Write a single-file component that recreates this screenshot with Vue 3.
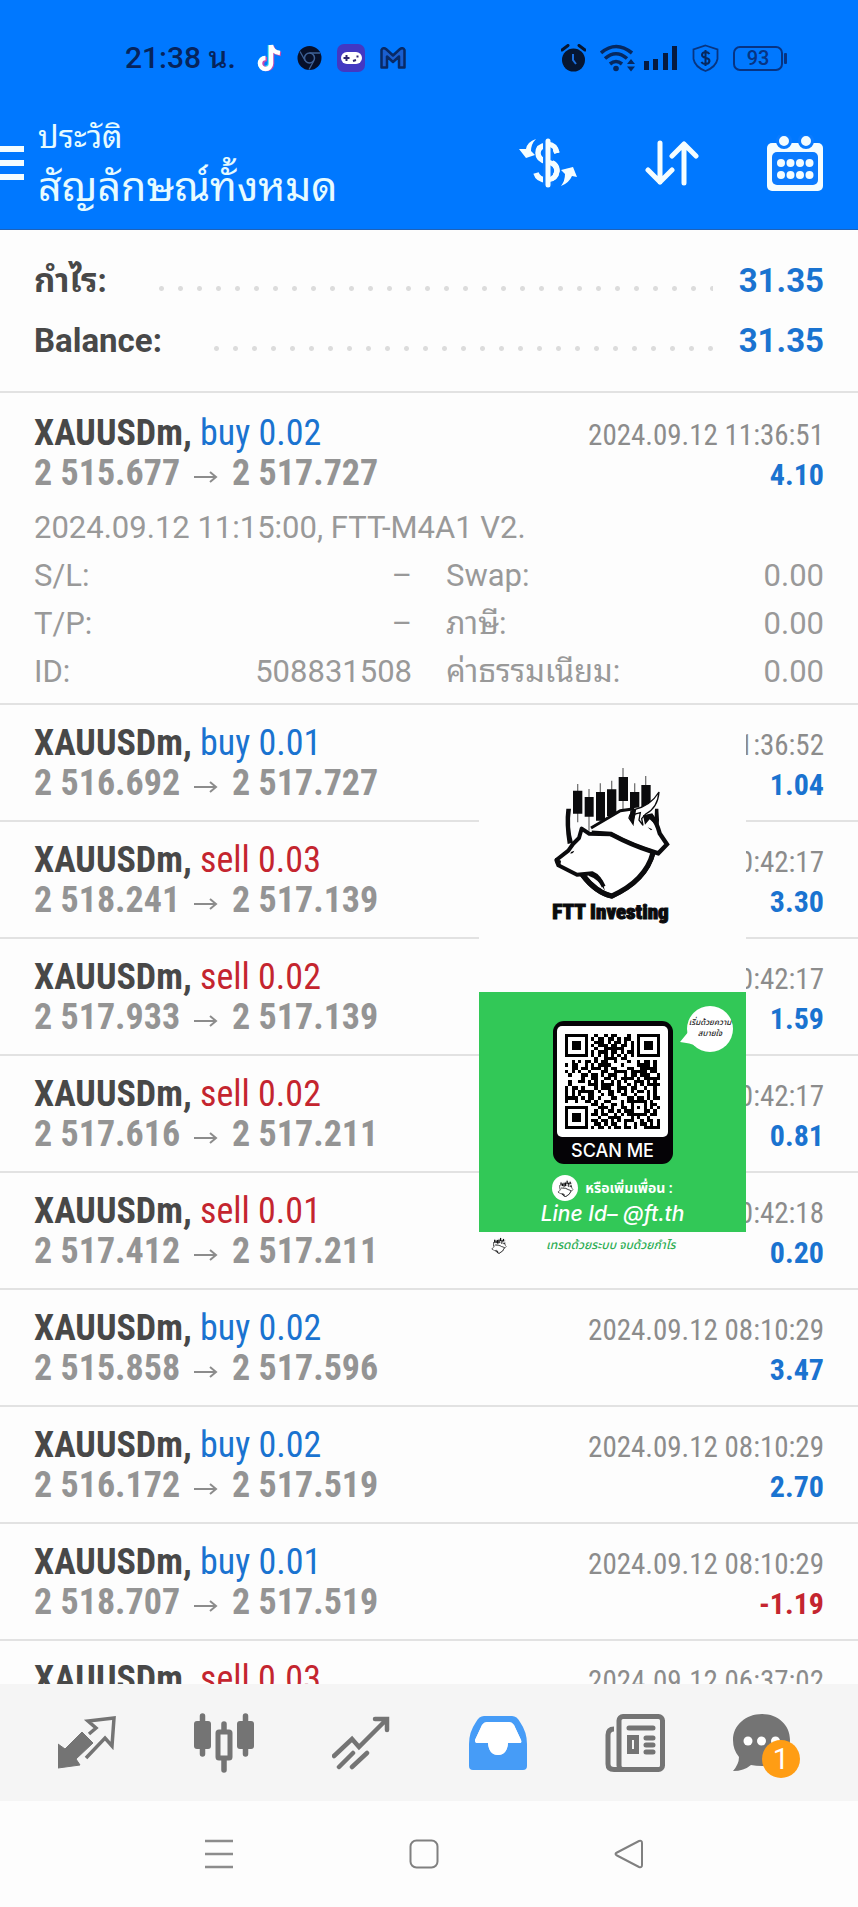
<script setup>
const summary = [
  { label: 'กำไร:', value: '31.35' },
  { label: 'Balance:', value: '31.35' },
]

const details = [
  { label: 'S/L:', value: '–' },
  { label: 'Swap:', value: '0.00' },
  { label: 'T/P:', value: '–' },
  { label: 'ภาษี:', value: '0.00' },
  { label: 'ID:', value: '508831508' },
  { label: 'ค่าธรรมเนียม:', value: '0.00' },
]

const deals = [
  { side: 'buy', lot: '0.02', open: '2 515.677', close: '2 517.727', time: '2024.09.12 11:36:51', profit: '4.10', expanded: true },
  { side: 'buy', lot: '0.01', open: '2 516.692', close: '2 517.727', time: '2024.09.12 11:36:52', profit: '1.04' },
  { side: 'sell', lot: '0.03', open: '2 518.241', close: '2 517.139', time: '2024.09.12 10:42:17', profit: '3.30' },
  { side: 'sell', lot: '0.02', open: '2 517.933', close: '2 517.139', time: '2024.09.12 10:42:17', profit: '1.59' },
  { side: 'sell', lot: '0.02', open: '2 517.616', close: '2 517.211', time: '2024.09.12 10:42:17', profit: '0.81' },
  { side: 'sell', lot: '0.01', open: '2 517.412', close: '2 517.211', time: '2024.09.12 10:42:18', profit: '0.20' },
  { side: 'buy', lot: '0.02', open: '2 515.858', close: '2 517.596', time: '2024.09.12 08:10:29', profit: '3.47' },
  { side: 'buy', lot: '0.02', open: '2 516.172', close: '2 517.519', time: '2024.09.12 08:10:29', profit: '2.70' },
  { side: 'buy', lot: '0.01', open: '2 518.707', close: '2 517.519', time: '2024.09.12 08:10:29', profit: '-1.19' },
  { side: 'sell', lot: '0.03', open: '2 518.707', close: '2 517.519', time: '2024.09.12 06:37:02', profit: '2.10' },
]

const qrRows = [
  '#######..#..#.##...#..#######',
  '#.....#.#.##.##.#.##..#.....#',
  '#.###.#..###.#.##.#.#.#.###.#',
  '#.###.#.#.###.##.##.#.#.###.#',
  '#.###.#..#..######..#.#.###.#',
  '#.....#.#.###.##.#.##.#.....#',
  '#######.#.#.#.#.#.#.#.#######',
  '.........#..####.##..........',
  '..#.#.##.#.##..#...#..#.##.#.',
  '#.##..#.#.####...#....####.#.',
  '..##.##.###.#.##...##..#####.',
  '#.#.#..#...##..####.#####.##.',
  '.#...##.##.#.###..#.##.###..#',
  '.....#..##..##.#.####.#.#####',
  '.#..##.#.#.#..#.#.#..###.#.#.',
  '.#.....###.####.#..#.#.#.####',
  '#.##.#...#.###..###.##..#..#.',
  '#.#.#####.#..##.#.#.#.##.#.#.',
  '#.#.#..##..#.##..##..#...#.#.',
  '####.#.##.#...##...##.##.#.##',
  '#..#..##.#..##...#.######.#..',
  '........##.#..##.#..#...#.##.',
  '#######...###.#..##.#.#.#.#.#',
  '#.....#..#.#.##.#.###...##.#.',
  '#.###.#.##.##..#.#.######.##.',
  '#.###.#...#..####...#.#..#...',
  '#.###.#.##.##.#.#.###..#.##.#',
  '#.....#..##.#.##..#..#.##.#.#',
  '#######.#.##.#.##.##.#..#####',
]
const qrPath = qrRows
  .flatMap((row, y) => [...row].map((c, x) => (c === '#' ? `M${x} ${y}h1v1h-1z` : '')))
  .join('')
</script>

<template>
  <div class="screen">
    <svg class="defs" width="0" height="0" aria-hidden="true">
      <symbol id="ftt-mark" viewBox="0 0 372 405">
        <g stroke="#777" stroke-width="4">
          <path d="M86 60V175M120 75V200M154 58V170M188 50V150M222 12V135M257 58V130M290 36V120" />
        </g>
        <path d="M72 80h28v69H72zM107 99h27v59h-27zM141 84h27v86h-27zM174 76h28v80h-28zM209 39h28v72h-28zM243 84h28v55h-28zM277 63h28v66h-28z" fill="#0b0b0d" />
        <path d="M66 134H52Q46 180 56 240L72 236Q58 190 66 134z" fill="#0b0b0d" />
        <path d="M100 332Q140 385 188 396Q290 350 312 266" fill="none" stroke="#0b0b0d" stroke-width="16" />
        <path d="M318 134h10q4 32 0 66l-12-20z" fill="#0b0b0d" />
        <path d="M134 190L214 142L256 132L286 128Q318 112 330 86Q326 130 306 152Q326 180 330 202L354 240L342 254L328 268L298 262L190 212z" fill="#fff" />
        <path d="M126 192L214 140L256 134" fill="none" stroke="#0b0b0d" stroke-width="9" />
        <path d="M128 206L186 210Q250 245 328 268L354 241L332 208Q324 176 306 154" fill="none" stroke="#0b0b0d" stroke-width="13" />
        <path d="M258 136Q304 126 330 84Q326 132 290 150L278 164L282 184L270 168L274 146L258 150Q252 162 252 180L240 162Q244 144 258 136z" fill="#fff" stroke="#0b0b0d" stroke-width="4" />
        <path d="M244 140l18-6-8 46-12-14zM282 154l28-6 18 42-26-24-14 16zM296 190l14 6-4 3z" fill="#0b0b0d" />
        <path d="M98 196L122 210L186 212L300 262L306 272Q286 345 188 390L158 376Q158 345 130 328L84 332L26 302L22 288L58 258L70 240L92 214z" fill="#fff" />
        <path d="M186 211Q250 245 306 262" fill="none" stroke="#0b0b0d" stroke-width="13" />
        <path d="M122 210L98 194L90 222L72 240L58 260L22 288L28 304L84 332L130 328Q150 336 164 368M118 209L186 211" fill="none" stroke="#0b0b0d" stroke-width="12" stroke-linejoin="round" />
        <path d="M100 332Q140 385 188 396Q290 350 312 266" fill="none" stroke="#0b0b0d" stroke-width="15" />
        <path d="M120 330Q150 328 160 350L168 382Q150 345 120 336zM18 282l18 8-2 16-14-8zM66 264l10-4-4 7-8 2z" fill="#0b0b0d" />
      </symbol>
    </svg>

    <header class="top">
      <div class="status">
        <div class="status-group">
          <span class="clock">21:38 น.</span>
          <svg width="26" height="28" viewBox="0 0 26 28">
            <path d="M14 1v18a5 5 0 1 1-5-5M14 1q1 7 9 8" fill="none" stroke="#3fe5e8" stroke-width="4.5" />
            <path d="M16 2v18a5 5 0 1 1-5-5M16 2q1 7 9 8" fill="none" stroke="#c44ab0" stroke-width="4.5" />
            <path d="M15 1v18.500a5.500 5.500 0 1 1-5.500-5.500M15 1q1 7 9 8" fill="none" stroke="#fff" stroke-width="4.500" />
          </svg>
          <svg width="25" height="26" viewBox="0 0 25 26">
            <circle cx="12.500" cy="13" r="12" fill="#07102a" />
            <circle cx="12.500" cy="13" r="5" fill="none" stroke="#3f6196" stroke-width="1.500" />
            <path d="M12.500 8H23M8 15.500L3 6.500M17 15.500L12 24.500" stroke="#3f6196" stroke-width="1.300" />
          </svg>
          <svg width="28" height="28" viewBox="0 0 28 28">
            <rect width="28" height="28" rx="7" fill="#4338c2" />
            <rect x="4" y="8" width="21" height="12" rx="6" fill="#fff" />
            <path d="M9.500 11v6M6.500 14h6M16 17l3-1M19.500 12.500h2" stroke="#2c236f" stroke-width="2" />
          </svg>
          <svg width="26" height="22" viewBox="0 0 26 22">
            <path d="M1.500 20.500V3Q3 0 6 2L13 8.500L20 2Q23 0 24.500 3V20.500H19V9.500L13 15L7 9.500V20.500z" fill="#1a5fd0" stroke="#082a66" stroke-width="2.500" stroke-linejoin="round" />
          </svg>
        </div>
        <div class="status-group right">
          <svg width="25" height="28" viewBox="0 0 25 28">
            <circle cx="12.500" cy="16" r="11.500" fill="#061632" />
            <path d="M1 6L7 1.500M24 6L18 1.500" stroke="#061632" stroke-width="3" stroke-linecap="round" />
            <path d="M12 10v6l3 4" fill="none" stroke="#1e6fdc" stroke-width="2" />
          </svg>
          <svg width="78" height="28" viewBox="0 0 78 28">
            <g fill="none" stroke="#06285f" stroke-width="3.600">
              <path d="M1 9Q16 -4 32 9" /><path d="M5 14.500Q16 5 27 14.500" /><path d="M10 20Q16 15 22 20" />
            </g>
            <circle cx="16" cy="24.500" r="2.800" fill="#06285f" />
            <path d="M27 20l4-5 4 5zM27 22.500l4 5 4-5z" fill="#06285f" />
            <path d="M44 17h5v9h-5zM53 15h5v11h-5zM63 9h5v17h-5zM72 2h5v24h-5z" fill="#061a40" />
          </svg>
          <svg width="27" height="28" viewBox="0 0 27 28">
            <path d="M13.500 1.500L25.500 5.500V15Q24 23 13.500 27Q3 23 1.500 15V5.500z" fill="none" stroke="#083580" stroke-width="1.800" />
            <path d="M17.500 10Q16 8 13.500 8Q10 8.300 10 11Q10 13 13.500 13.700Q17.500 14.500 17.500 17Q17 20 13.500 20Q10.500 20 9.500 17.800M13.500 6v16" fill="none" stroke="#06285f" stroke-width="2" />
          </svg>
          <span class="battery">93</span>
        </div>
      </div>

      <div class="appbar">
        <button class="burger" aria-label="Menu"><i></i><i></i><i></i></button>
        <div class="titles">
          <p class="sub">ประวัติ</p>
          <h1>สัญลักษณ์ทั้งหมด</h1>
        </div>
        <nav class="actions">
          <button aria-label="Currency">
            <svg width="58" height="50" viewBox="0 0 58 50">
              <path d="M38 15Q35 7 28 7Q19 8 19 15Q19 22 28 23.500Q38 25 38 33Q37 41 28 42Q19 42 17 35" fill="none" stroke="#f4fdff" stroke-width="5.500" />
              <path d="M29 3v44" stroke="#0a7bff" stroke-width="10" /><path d="M29 3v44" stroke="#f4fdff" stroke-width="5" stroke-linecap="round" />
              <path d="M29 6Q37 7 38 15M29 24Q38 26 38 33Q37 41 29 42" fill="none" stroke="#f4fdff" stroke-width="5" />
              <path d="M17 1Q8 4 7 11L0 11L7 20L16 17L12 13Q12 6 17 1zM42 48Q50 45 53 38L58 39L54 29L42 32L46 36Q46 43 42 48z" fill="#f4fdff" />
            </svg>
          </button>
          <button aria-label="Sort">
            <svg width="54" height="46" viewBox="0 0 54 46">
              <path d="M15 3V42M3 30L15 42L27 30M39 43V4M27 16L39 4L51 16" fill="none" stroke="#f4fdff" stroke-width="5" stroke-linecap="round" stroke-linejoin="round" />
            </svg>
          </button>
          <button aria-label="Calendar">
            <svg width="56" height="56" viewBox="0 0 56 56">
              <rect y="8" width="56" height="48" rx="5" fill="#f4fdff" />
              <rect x="5" y="17" width="46" height="33" rx="5" fill="#0a7bff" />
              <g fill="#f4fdff" stroke="#0a7bff" stroke-width="3"><circle cx="17" cy="6" r="6.500" /><circle cx="39" cy="6" r="6.500" /></g>
              <g fill="#f4fdff">
                <circle v-for="n in 8" :key="n" :cx="14 + ((n - 1) % 4) * 9.500" :cy="n > 4 ? 40 : 28" r="4" />
              </g>
            </svg>
          </button>
        </nav>
      </div>
    </header>

    <main class="content">
      <dl class="summary">
        <div v-for="row in summary" :key="row.label" class="sum-row">
          <dt>{{ row.label }}</dt>
          <span class="dots"></span>
          <dd>{{ row.value }}</dd>
        </div>
      </dl>

      <ul class="deals">
        <li v-for="(d, i) in deals" :key="i" class="deal" :class="{ expanded: d.expanded }">
          <div class="line">
            <span class="symbol">XAUUSDm, <span :class="d.side">{{ d.side }} {{ d.lot }}</span></span>
            <time>{{ d.time }}</time>
          </div>
          <div class="line">
            <span class="prices">{{ d.open }}<svg width="24" height="12" viewBox="0 0 24 12"><path d="M0 6H22M16 1L22 6L16 11" fill="none" stroke="#8c8c8c" stroke-width="2" /></svg>{{ d.close }}</span>
            <span class="profit" :class="{ loss: d.profit.startsWith('-') }">{{ d.profit }}</span>
          </div>
          <div v-if="d.expanded" class="more">
            <p>2024.09.12 11:15:00, FTT-M4A1 V2.</p>
            <dl>
              <div v-for="x in details" :key="x.label"><dt>{{ x.label }}</dt><dd>{{ x.value }}</dd></div>
            </dl>
          </div>
        </li>
      </ul>

      <aside class="promo">
        <div class="brand">
          <svg width="124" height="135"><use href="#ftt-mark" /></svg>
          <strong>FTT Investing</strong>
        </div>
        <div class="green">
          <div class="qr">
            <svg viewBox="0 0 29 29" shape-rendering="crispEdges"><path :d="qrPath" /></svg>
            <span>SCAN ME</span>
          </div>
          <div class="bubble">
            <svg width="54" height="48" viewBox="0 0 54 48"><circle cx="30" cy="24" r="23" fill="#fff" /><path d="M9 26L0 37Q10 38 17 41z" fill="#fff" /></svg>
            <span>เริ่มด้วยความ<br>สบายใจ</span>
          </div>
          <p class="add"><i><svg width="17" height="18"><use href="#ftt-mark" /></svg></i>หรือเพิ่มเพื่อน :</p>
          <p class="line-id">Line Id– @ft.th</p>
        </div>
        <div class="foot">
          <svg width="16" height="18"><use href="#ftt-mark" /></svg>
          <em>เทรดด้วยระบบ จบด้วยกำไร</em>
        </div>
      </aside>
    </main>

    <nav class="tabs">
      <button aria-label="Quotes">
        <svg width="58" height="54" viewBox="0 0 58 54">
          <path d="M24 16L35 27L18 43L22 49L0 52V28L7 33z" fill="#747474" stroke="#747474" stroke-width="1" stroke-linejoin="round" />
          <path d="M31 18L38 12L30 5L56 2L54 30L47 22L28 42" fill="none" stroke="#747474" stroke-width="3.500" />
        </svg>
      </button>
      <button aria-label="Charts">
        <svg width="60" height="60" viewBox="0 0 60 60">
          <path d="M8.500 3V41M51.500 3V41M30 11V57" stroke="#747474" stroke-width="5.500" stroke-linecap="round" />
          <rect y="8" width="17" height="28" rx="3" fill="#747474" /><rect x="43" y="8" width="17" height="28" rx="3" fill="#747474" />
          <rect x="24" y="19" width="12" height="26" rx="1" fill="#f5f5f5" stroke="#747474" stroke-width="5" />
        </svg>
      </button>
      <button aria-label="Trade">
        <svg width="58" height="54" viewBox="0 0 58 54">
          <path d="M2 40L20 23L27 31L53 5M43 3H55V14M7 51L21 37M20 51L35 37" fill="none" stroke="#747474" stroke-width="4.500" stroke-linecap="round" />
        </svg>
      </button>
      <button aria-label="History">
        <svg width="58" height="54" viewBox="0 0 58 54">
          <path fill-rule="evenodd" d="M15 0H43Q48 0 51 6Q58 16 58 28V50Q58 54 54 54H4Q0 54 0 50V28Q0 16 7 6Q10 0 15 0zM18 6Q15 6 13 9L6 24Q6 27 8 27H19Q20 39 29 39Q38 39 39 27H51Q53 27 52 24L45 9Q43 6 40 6z" fill="#469cf7" />
          <path d="M18 6Q15 6 13 9L6 24Q6 27 8 27H19Q20 39 29 39Q38 39 39 27H51Q53 27 52 24L45 9Q43 6 40 6z" fill="#fff" />
        </svg>
      </button>
      <button aria-label="News">
        <svg width="60" height="58" viewBox="0 0 60 58">
          <rect x="14" y="2.500" width="43.500" height="53" rx="4" fill="none" stroke="#747474" stroke-width="5" />
          <path d="M9 15Q3 15 3 21V50Q3 55.500 9 55.500H20" fill="none" stroke="#747474" stroke-width="5" />
          <path d="M24 14H48M41 24H48M41 31H48M41 38H48" stroke="#747474" stroke-width="5" stroke-linecap="round" />
          <path d="M24.500 23.500h7v14h-7z" fill="none" stroke="#747474" stroke-width="5" />
        </svg>
      </button>
      <button aria-label="Messages" class="chat">
        <svg width="80" height="58" viewBox="0 0 80 58">
          <path d="M30 0C46 0 58 11 58 26S46 52 30 52Q24 52 19 51Q12 57 1 57Q7 50 7 43Q1 36 1 26C1 11 14 0 30 0z" fill="#747474" />
          <circle cx="16" cy="27" r="4.500" fill="#fff" /><circle cx="29.500" cy="27" r="4.500" fill="#fff" /><circle cx="43.500" cy="27" r="4.500" fill="#fff" />
        </svg>
        <span class="badge">1</span>
      </button>
    </nav>

    <nav class="system">
      <button aria-label="Recent apps"><svg width="30" height="30" viewBox="0 0 30 30"><path d="M1 2H29M1 15H29M1 28H29" stroke="#8c8c8c" stroke-width="2.500" /></svg></button>
      <button aria-label="Home"><svg width="30" height="30" viewBox="0 0 30 30"><rect x="1.500" y="1.500" width="27" height="27" rx="6" fill="none" stroke="#808080" stroke-width="2" /></svg></button>
      <button aria-label="Back"><svg width="30" height="30" viewBox="0 0 30 30"><path d="M3 13.500L25 2Q28 1 28 4V26Q28 29 25 28L3 16.500Q0 15 3 13.500z" fill="none" stroke="#808080" stroke-width="2" /></svg></button>
    </nav>
  </div>
</template>

<style>
body {
  background: #fdfdfd;
}
</style>

<style scoped>
.screen {
  display: flex;
  flex-direction: column;
  height: 100vh;
  overflow: hidden;
  background: #fdfdfd;
  color: #484848;
  font-family: Roboto, "Noto Sans Thai Looped", "Noto Looped Thai", Loma, Garuda, Waree, Umpush, "Noto Sans Thai", "Noto Sans", sans-serif;
}
.defs { position: absolute; }
p, h1, ul, dl, dd { margin: 0; padding: 0; }
svg { display: block; flex: none; }
button { border: 0; padding: 0; background: none; display: grid; place-items: center; }

.top { flex: none; background: #0078ff; border-bottom: 1px solid #1f62b8; }
.status { display: flex; justify-content: space-between; align-items: center; height: 48px; padding: 34px 70px 0 125px; }
.status-group { display: flex; align-items: center; gap: 15px; }
.status-group.right { gap: 14px; }
.clock { width: 116px; font-size: 30px; line-height: 48px; font-weight: 500; color: #06245c; white-space: nowrap; }
.battery {
  position: relative;
  width: 46px;
  margin-right: 5px;
  border: 2px solid #073483;
  border-radius: 7px;
  font-size: 20px;
  line-height: 21px;
  font-weight: 500;
  text-align: center;
  color: #073483;
}
.battery::after { content: ""; position: absolute; right: -6px; top: 5px; width: 3px; height: 11px; border-radius: 1px; background: #073483; }
.appbar { display: flex; align-items: center; height: 147px; padding: 14px 35px 0 0; box-sizing: border-box; }
.burger { width: 24px; gap: 8px; }
.burger i { width: 24px; height: 6px; background: #f4fdff; }
.titles { flex: 1; padding: 4px 0 0 14px; color: #e6fbff; }
.sub { font-size: 32px; line-height: 44px; }
h1 { font-size: 41px; line-height: 56px; font-weight: 400; white-space: nowrap; }
.actions { display: flex; align-items: center; gap: 68px; }

.content { flex: 1; min-height: 0; position: relative; overflow: hidden; }
.summary { padding: 21px 34px 20px; border-bottom: 2px solid #e2e2e2; }
.sum-row { display: flex; align-items: center; height: 60px; line-height: 60px; font-size: 33px; font-weight: 700; }
.dots { flex: 1; height: 5px; margin: 14px 26px 0 45px; background: radial-gradient(circle, #dcdcdc 0 2px, transparent 3px) 0 0 / 19px 5px repeat-x; }
.sum-row dd { color: #1a73d0; }

.deals { list-style: none; }
.deal { padding: 18px 34px 17px; border-bottom: 2px solid #e2e2e2; }
.deal.expanded { padding: 20px 34px 7px; }
.line { display: flex; justify-content: space-between; align-items: baseline; height: 40px; line-height: 40px; white-space: nowrap; font-family: "Roboto Condensed", Roboto, sans-serif; }
.symbol { font-size: 36px; font-weight: 700; }
.symbol span { font-weight: 400; }
.buy { color: #1a73d0; }
.sell { color: #c4252f; }
time { font-size: 29px; color: #8c8c8c; }
.prices { display: flex; align-items: center; font-size: 36px; font-weight: 700; color: #949494; }
.prices svg { margin: 8px 14px 0; }
.profit { font-size: 30px; font-weight: 700; color: #1a73d0; }
.profit.loss { color: #c4252f; }
.more { margin-top: 11px; font-size: 31px; line-height: 48px; color: #999; }
.more dl { display: grid; grid-template-columns: 1fr 1fr; column-gap: 34px; }
.more dl div { display: flex; justify-content: space-between; height: 48px; }

.promo { position: absolute; top: 488px; right: 112px; width: 267px; background: #fdfdfd; }
.brand { height: 228px; padding: 46px 4px 0 0; display: flex; flex-direction: column; align-items: center; color: #0b0b0d; }
.brand strong { font-family: "Roboto Condensed", Roboto, sans-serif; font-weight: 900; font-size: 21px; line-height: 26px; -webkit-text-stroke: 1px #0b0b0d; }
.green { position: relative; display: flex; flex-direction: column; align-items: center; height: 211px; padding-top: 29px; background: #32c857; color: #fff; }
.qr { width: 120px; height: 143px; border-radius: 11px; background: #050306; text-align: center; font-size: 18px; font-weight: 500; line-height: 28px; font-family: Inter, sans-serif; }
.qr svg { width: 95px; height: 95px; margin: 5px auto 0; padding: 8px; border-radius: 5px; background: #fff; }
.bubble { position: absolute; top: 13px; right: 12px; color: #222; font-size: 8px; line-height: 11px; text-align: center; font-style: italic; font-weight: 500; }
.bubble span { position: absolute; inset: 12px 0 0 6px; white-space: nowrap; }
.add, .bubble, .foot { font-family: Roboto, "Noto Sans Thai", sans-serif; }
.add { display: flex; align-items: center; gap: 7px; margin-top: 11px; font-size: 14px; line-height: 26px; font-weight: 700; white-space: nowrap; }
.add i { display: grid; place-items: center; width: 26px; height: 26px; border-radius: 50%; background: #fff; }
.line-id { font-size: 21px; line-height: 26px; font-style: italic; font-weight: 500; font-family: Inter, sans-serif; }
.foot { display: flex; align-items: center; gap: 39px; height: 26px; padding-left: 12px; color: #2fae55; }
.foot em { font-size: 12px; font-weight: 500; white-space: nowrap; }

.tabs { flex: none; display: grid; grid-template-columns: repeat(6, 1fr); align-items: center; height: 117px; padding: 0 18px; background: #f5f5f5; }
.tabs button { height: 117px; position: relative; }
.badge { position: absolute; left: 43%; bottom: 23px; width: 38px; height: 38px; border-radius: 50%; background: #ff9d14; color: #fff; font: 29px/38px Roboto, sans-serif; }
.system { flex: none; display: grid; grid-template-columns: repeat(3, 1fr); height: 106px; padding: 0 126px 0 116px; }
</style>
